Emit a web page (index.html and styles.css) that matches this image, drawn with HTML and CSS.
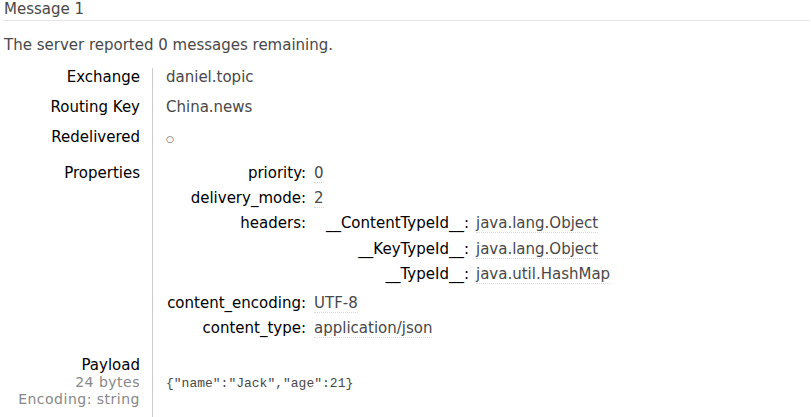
FILE: index.html
```html
<!DOCTYPE html>
<html>
<head>
<meta charset="utf-8">
<link rel="stylesheet" href="styles.css">
</head>
<body>
<div class="page">
  <h2 class="title">Message 1</h2>
  <p class="summary">The server reported 0 messages remaining.</p>
  <table class="facts">
    <tr><th>Exchange</th><td>daniel.topic</td></tr>
    <tr><th>Routing Key</th><td>China.news</td></tr>
    <tr><th>Redelivered</th><td><span class="bool">○</span></td></tr>
    <tr class="props-row">
      <th>Properties</th>
      <td>
        <table class="props">
          <tr><th>priority:</th><td><span class="v">0</span></td></tr>
          <tr><th>delivery_mode:</th><td><span class="v">2</span></td></tr>
          <tr><th>headers:</th><td class="nest">
            <table class="headers">
              <tr><th>__ContentTypeId__:</th><td><span class="v">java.lang.Object</span></td></tr>
              <tr><th>__KeyTypeId__:</th><td><span class="v">java.lang.Object</span></td></tr>
              <tr><th>__TypeId__:</th><td><span class="v">java.util.HashMap</span></td></tr>
            </table>
          </td></tr>
          <tr><th>content_encoding:</th><td><span class="v">UTF-8</span></td></tr>
          <tr><th>content_type:</th><td><span class="v">application/json</span></td></tr>
        </table>
      </td>
    </tr>
    <tr class="payload-row">
      <th><span class="line main">Payload</span><span class="line sub">24 bytes</span><span class="line sub">Encoding: string</span></th>
      <td><pre class="json">{"name":"Jack","age":21}</pre></td>
    </tr>
  </table>
</div>
</body>
</html>
```
FILE: styles.css
```css
html, body {
  margin: 0;
  padding: 0;
  background: #fff;
}
body {
  font-family: "DejaVu Sans", Verdana, sans-serif;
  font-size: 15px;
  line-height: 17px;
  color: #484848;
}
.page {
  padding: 0 1px 0 4px;
}
.title {
  margin: 0 0 0 -1px;
  padding: 1px 0 2px 1px;
  font-size: 15px;
  font-weight: normal;
  line-height: 17px;
  color: #484848;
  border-bottom: 1px solid #e4e4e4;
}
.summary {
  margin: 16px 0 14px 0;
}
table {
  border-collapse: collapse;
  border-spacing: 0;
}
.facts > tbody > tr > th {
  width: 136px;
  padding: 1px 12px 12px 0;
  text-align: right;
  vertical-align: top;
  font-weight: normal;
  color: #000;
  border-right: 1px solid #cccccc;
}
.facts > tbody > tr > td {
  padding: 1px 0 12px 13px;
  vertical-align: top;
}
.bool {
  font-size: 9px;
  line-height: 17px;
  color: #555;
}
.facts > tbody > tr.props-row > th {
  padding-top: 5px;
}
.facts > tbody > tr.props-row > td {
  padding-top: 0;
  padding-bottom: 17px;
}
.props th {
  width: 140px;
  padding: 5px 8px 3px 0;
  text-align: right;
  vertical-align: top;
  font-weight: normal;
  color: #000;
  white-space: nowrap;
}
.props td {
  padding: 5px 0 3px 0;
  vertical-align: top;
  white-space: nowrap;
}
.props td.nest {
  padding: 0;
}
.headers {
  margin-bottom: 3px;
}
.headers th {
  width: 155px;
  padding: 5px 7px 3px 0;
  line-height: 17.5px;
}
.headers td {
  padding: 5px 0 3px 0;
  line-height: 17.5px;
}
.v {
  border-bottom: 1px dotted #d8d8d8;
}
.facts > tbody > tr.payload-row > th {
  padding-top: 0;
  padding-bottom: 20px;
}
.line {
  display: block;
}
.line.main {
  line-height: 17.5px;
}
.line.sub {
  font-size: 14px;
  line-height: 16.5px;
  letter-spacing: 0.5px;
  color: #888;
}
.facts > tbody > tr.payload-row > td {
  padding-top: 19px;
}
.json {
  margin: 0;
  font-family: "Liberation Mono", "Courier New", monospace;
  font-size: 13px;
  line-height: 15px;
  color: #484848;
}
```
